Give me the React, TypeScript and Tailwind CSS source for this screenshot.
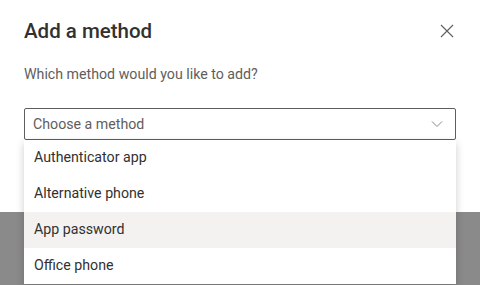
import React from "react";

export default function App() {
  const items = ["Authenticator app", "Alternative phone", "App password", "Office phone"];
  return (
    <div
      className="relative w-[480px] h-[285px] overflow-hidden bg-[#8a8a8a]"
      style={{ fontFamily: 'Roboto, "Noto Sans", sans-serif' }}
    >
      <div className="bg-white h-[212px] px-6 pt-[17px]">
        <div className="flex items-center justify-between">
          <h1 className="text-[20.5px] leading-[28px] font-medium text-[#323130]">Add a method</h1>
          <svg width="14" height="14" viewBox="0 0 14 14" className="mr-[2px]">
            <path d="M1 1 L13 13 M13 1 L1 13" stroke="#605e5c" strokeWidth="1.1" fill="none" />
          </svg>
        </div>
        <p className="mt-[19px] text-[14.2px] leading-[20px] text-[#605e5c]">Which method would you like to add?</p>
        <div className="relative mt-[24px]">
          <div className="h-[32px] border border-[#605e5c] rounded-[2px] flex items-center justify-between pl-[8px] pr-[12px]">
            <span className="text-[14.2px] text-[#605e5c] mt-[1px]">Choose a method</span>
            <svg width="12" height="8" viewBox="0 0 12 8">
              <path d="M1 1.5 L6 6.5 L11 1.5" stroke="#8a8886" strokeWidth="1" fill="none" />
            </svg>
          </div>
          <div className="absolute left-0 right-0 top-[32px] bg-white shadow-[0_3px_8px_rgba(0,0,0,0.2)] z-10">
            {items.map((it) => (
              <div
                key={it}
                className={`h-[36px] flex items-center pl-[10px] pb-[1px] text-[14.2px] text-[#323130] ${it === "App password" ? "bg-[#f3f2f1]" : ""}`}
              >
                {it}
              </div>
            ))}
          </div>
        </div>
      </div>
    </div>
  );
}
